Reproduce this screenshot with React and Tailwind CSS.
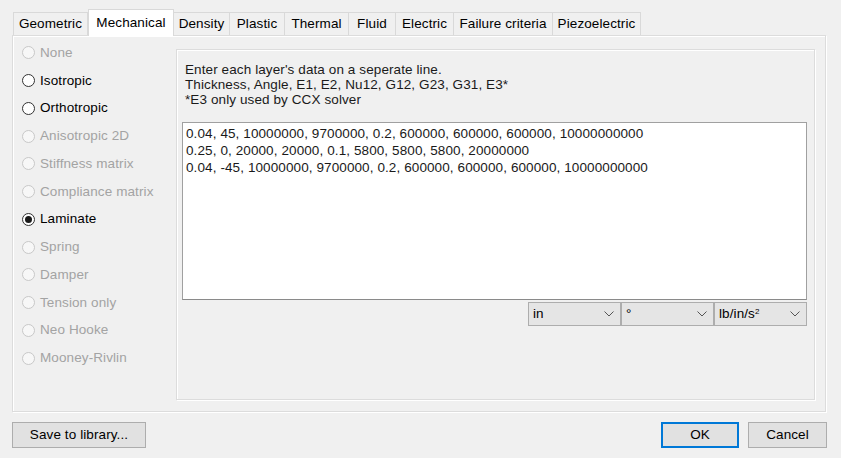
import React from "react";

const tabs = [
  { label: "Geometric", w: 75 },
  { label: "Mechanical", w: 86, active: true },
  { label: "Density", w: 56 },
  { label: "Plastic", w: 55 },
  { label: "Thermal", w: 64 },
  { label: "Fluid", w: 47 },
  { label: "Electric", w: 58 },
  { label: "Failure criteria", w: 99 },
  { label: "Piezoelectric", w: 88 },
];

const radios = [
  { label: "None" },
  { label: "Isotropic", enabled: true },
  { label: "Orthotropic", enabled: true },
  { label: "Anisotropic 2D" },
  { label: "Stiffness matrix" },
  { label: "Compliance matrix" },
  { label: "Laminate", enabled: true, checked: true },
  { label: "Spring" },
  { label: "Damper" },
  { label: "Tension only" },
  { label: "Neo Hooke" },
  { label: "Mooney-Rivlin" },
];

function Radio({ label, enabled, checked }) {
  return (
    <div className="flex items-center h-[27.75px]">
      <div
        className={
          "ml-[9px] w-[13px] h-[13px] rounded-full border flex items-center justify-center " +
          (enabled ? "border-[#333333] bg-white" : "border-[#c8c8c8] bg-[#f7f7f7]")
        }
      >
        {checked && <div className="w-[7px] h-[7px] rounded-full bg-[#1a1a1a]" />}
      </div>
      <span className={"ml-[5px] " + (enabled ? "text-black" : "text-[#a3a3a3]")}>{label}</span>
    </div>
  );
}

function Chevron() {
  return (
    <svg width="10" height="6" viewBox="0 0 10 6" className="shrink-0">
      <path d="M0.5 0.5 L5 5 L9.5 0.5" fill="none" stroke="#555" strokeWidth="1" />
    </svg>
  );
}

function Select({ w, children }) {
  return (
    <div
      className="h-[24px] border border-[#adadad] bg-[#e5e5e5] flex items-center justify-between pl-[4px] pr-[6px]"
      style={{ width: w }}
    >
      <span className="leading-none text-black">{children}</span>
      <Chevron />
    </div>
  );
}

export default function App() {
  return (
    <div
      className="w-[841px] h-[458px] bg-[#f0f0f0] text-[13.5px] tracking-[0.1px] text-black overflow-hidden"
      style={{ fontFamily: '"Liberation Sans", Arial, sans-serif' }}
    >
      <div className="pt-[9px] pl-[12px]">
        {/* tabs */}
        <div className="flex items-end h-[26px] pl-[1px] relative z-10">
          {tabs.map((t) =>
            t.active ? (
              <div
                key={t.label}
                className="h-[27px] -mb-[1px] bg-white border-t border-l border-r border-[#d9d9d9] flex items-start justify-center pt-[3px]"
                style={{ width: t.w }}
              >
                {t.label}
              </div>
            ) : (
              <div
                key={t.label}
                className="h-[23px] bg-[#f0f0f0] border-t border-r border-[#d9d9d9] first:border-l flex items-center justify-center"
                style={{ width: t.w }}
              >
                {t.label}
              </div>
            )
          )}
        </div>
        {/* panel */}
        <div className="w-[814px] h-[377px] border border-[#dcdcdc] shadow-[inset_1px_1px_0_#ffffff,1px_1px_0_#ffffff] flex">
          <div className="w-[163px] pt-[3px]">
            {radios.map((r) => (
              <Radio key={r.label} {...r} />
            ))}
          </div>
          <div className="mt-[13px] w-[639px] h-[351px] border border-[#dcdcdc] shadow-[inset_1px_1px_0_#ffffff,1px_1px_0_#ffffff] pl-[5px] pr-[7px]">
            <div className="pl-[3px] pt-[12px] leading-[15px] text-[#1a1a1a]">
              <div>Enter each layer's data on a seperate line.</div>
              <div>Thickness, Angle, E1, E2, Nu12, G12, G23, G31, E3*</div>
              <div>*E3 only used by CCX solver</div>
            </div>
            <div className="mt-[15px] h-[178px] bg-white border border-[#a0a0a0] border-b-[#8a8a8a] pl-[3px] pt-[2px] leading-[17px] text-[#1a1a1a]">
              <div>0.04, 45, 10000000, 9700000, 0.2, 600000, 600000, 600000, 10000000000</div>
              <div>0.25, 0, 20000, 20000, 0.1, 5800, 5800, 5800, 20000000</div>
              <div>0.04, -45, 10000000, 9700000, 0.2, 600000, 600000, 600000, 10000000000</div>
            </div>
            <div className="flex justify-end mt-[2px]">
              <Select w={93}>in</Select>
              <Select w={93}>°</Select>
              <Select w={93}>
                lb/in/s<sup className="text-[8px]">2</sup>
              </Select>
            </div>
          </div>
        </div>
        {/* buttons */}
        <div className="flex mt-[10px] w-[815px]">
          <div className="w-[134px] h-[26px] border border-[#adadad] bg-[#e1e1e1] flex items-center justify-center">
            Save to library...
          </div>
          <div className="flex-1" />
          <div className="w-[78px] h-[26px] border-2 border-[#0078d7] bg-[#e1e1e1] flex items-center justify-center">
            OK
          </div>
          <div className="w-[79px] h-[26px] ml-[9px] border border-[#adadad] bg-[#e1e1e1] flex items-center justify-center">
            Cancel
          </div>
        </div>
      </div>
    </div>
  );
}
